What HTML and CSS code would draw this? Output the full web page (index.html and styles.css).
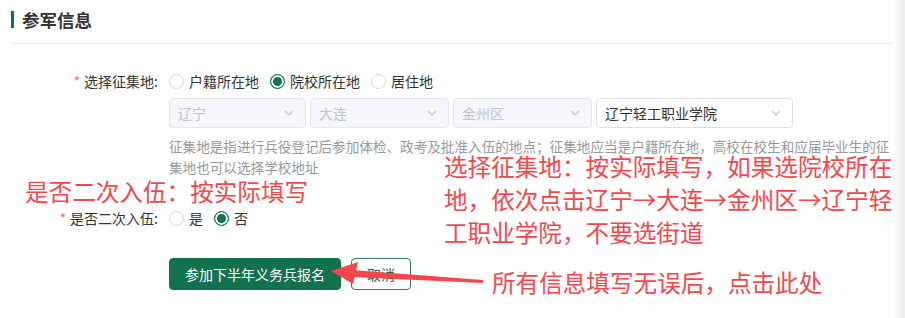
FILE: index.html
```html
<!DOCTYPE html>
<html lang="zh-CN">

<head>
  <meta charset="UTF-8" />
  <meta name="viewport" content="width=device-width, initial-scale=1.0" />
  <title>参军信息</title>
  <link rel="stylesheet" href="styles.css">
</head>

<body>
  <div class="info_panel">
    <div class="panel_header">
      <h2 class="heading">参军信息</h2>
    </div>

    <form class="enlist_form">
      <div class="form_item">
        <label class="item_label"><span class="required">*</span>选择征集地:</label>
        <div class="item_content">
          <div class="radio_group">
            <span class="radio"><span class="radio_dot"></span>户籍所在地</span>
            <span class="radio"><span class="radio_dot checked"></span>院校所在地</span>
            <span class="radio"><span class="radio_dot"></span>居住地</span>
          </div>

          <div class="select_row">
            <div class="select_field disabled w-137">辽宁
              <svg class="arrow_icon" width="10" height="6" viewBox="0 0 10 6"><path d="M1 1l4 4 4-4" fill="none" stroke="currentColor" stroke-width="1.2" /></svg>
            </div>
            <div class="select_field disabled w-139">大连
              <svg class="arrow_icon" width="10" height="6" viewBox="0 0 10 6"><path d="M1 1l4 4 4-4" fill="none" stroke="currentColor" stroke-width="1.2" /></svg>
            </div>
            <div class="select_field disabled w-139">金州区
              <svg class="arrow_icon" width="10" height="6" viewBox="0 0 10 6"><path d="M1 1l4 4 4-4" fill="none" stroke="currentColor" stroke-width="1.2" /></svg>
            </div>
            <div class="select_field w-197">辽宁轻工职业学院
              <svg class="arrow_icon" width="10" height="6" viewBox="0 0 10 6"><path d="M1 1l4 4 4-4" fill="none" stroke="currentColor" stroke-width="1.2" /></svg>
            </div>
          </div>

          <p class="help_text">征集地是指进行兵役登记后参加体检、政考及批准入伍的地点；征集地应当是户籍所在地，高校在校生和应届毕业生的征集地也可以选择学校地址</p>
        </div>
      </div>

      <div class="form_item second">
        <label class="item_label"><span class="required">*</span>是否二次入伍:</label>
        <div class="item_content">
          <div class="radio_group">
            <span class="radio"><span class="radio_dot"></span>是</span>
            <span class="radio"><span class="radio_dot checked"></span>否</span>
          </div>
        </div>
      </div>

      <div class="form_actions">
        <button class="submit_button" type="button">参加下半年义务兵报名</button>
        <button class="cancel_button" type="button">取消</button>
      </div>
    </form>
  </div>

  <!-- annotations drawn over the screenshot -->
  <div class="note note_second">是否二次入伍：按实际填写</div>
  <div class="note note_place">选择征集地：按实际填写，如果选院校所在<br />地，依次点击辽宁→大连→金州区→辽宁轻<br />工职业学院，不要选街道</div>
  <div class="note note_submit">所有信息填写无误后，点击此处</div>

  <svg class="note_arrow" width="905" height="318" viewBox="0 0 905 318">
    <polygon points="483,280 483,283 352,277 352,270" fill="#f4474c" />
    <polygon points="331,271 358,262 353,284" fill="#f4474c" />
  </svg>
</body>

</html>
```

FILE: styles.css
```css
body {
  font-family: "Noto Sans CJK SC", "Noto Sans", sans-serif;
  margin: 0;
  width: 905px;
  height: 318px;
  overflow: hidden;
  position: relative;
  color: #333;
  background: linear-gradient(to right, #fff 893px, #ececec 905px);
}

.info_panel {
  margin-left: 11px;
  width: 882px;
}

.panel_header {
  padding: 11px 0 15px;
  border-bottom: 1px solid #ececec;
}

.heading {
  margin: 0;
  border-left: 3px solid #12714f;
  padding-left: 8px;
  font-size: 17.5px;
  line-height: 17px;
  font-weight: 700;
  color: #333;
}

.enlist_form {
  padding-top: 21px;
}

.form_item {
  display: flex;
}

.form_item.second {
  margin-top: 24px;
}

.item_label {
  width: 158px;
  box-sizing: border-box;
  padding-right: 11px;
  text-align: right;
  font-size: 14px;
  line-height: 32px;
  color: #333;
}

.required {
  color: #f56c6c;
  margin-right: 4px;
}

.item_content {
  flex: 1;
}

.radio_group {
  display: flex;
  height: 32px;
  align-items: center;
  gap: 11px;
}

.radio {
  display: flex;
  align-items: center;
  gap: 5px;
  font-size: 14px;
  color: #333;
}

.radio_dot {
  width: 13px;
  height: 13px;
  border: 1px solid #d4d7dc;
  border-radius: 50%;
  background: #fff;
}

.radio_dot.checked {
  border-color: #12714f;
  background: #12714f;
  box-shadow: inset 0 0 0 2px #fff;
}

.select_row {
  display: flex;
  gap: 4px;
  margin-top: 1px;
}

.select_field {
  height: 30px;
  box-sizing: border-box;
  display: flex;
  align-items: center;
  justify-content: space-between;
  padding: 0 11px 0 8px;
  border: 1px solid #dcdfe6;
  border-radius: 4px;
  font-size: 14px;
  color: #333;
  background: #fff;
}

.select_field.disabled {
  background: #f5f7fa;
  border-color: #e4e7ed;
  color: #c0c4cc;
}

.arrow_icon {
  color: #c0c4cc;
}

.w-137 {
  width: 137px;
}

.w-139 {
  width: 139px;
}

.w-197 {
  width: 197px;
}

.help_text {
  margin: 8px 0 0;
  font-size: 13.6px;
  line-height: 21px;
  color: #999;
}

.form_actions {
  display: flex;
  gap: 10px;
  margin: 24px 0 0 158px;
}

.submit_button,
.cancel_button {
  height: 32px;
  padding: 0 15px;
  border-radius: 4px;
  font-family: inherit;
  font-size: 14px;
  cursor: pointer;
}

.submit_button {
  background: #12714f;
  border: 1px solid #12714f;
  color: #fff;
}

.cancel_button {
  background: #fff;
  border: 1px solid #2b7d5e;
  color: #1d6a4e;
}

.note {
  position: absolute;
  font-size: 23.6px;
  line-height: 24px;
  color: #f4474c;
  white-space: nowrap;
}

.note_second {
  left: 25px;
  top: 179px;
}

.note_place {
  left: 444px;
  top: 150px;
  line-height: 33px;
}

.note_submit {
  left: 492px;
  top: 270px;
}

.note_arrow {
  position: absolute;
  left: 0;
  top: 0;
  pointer-events: none;
}
```
